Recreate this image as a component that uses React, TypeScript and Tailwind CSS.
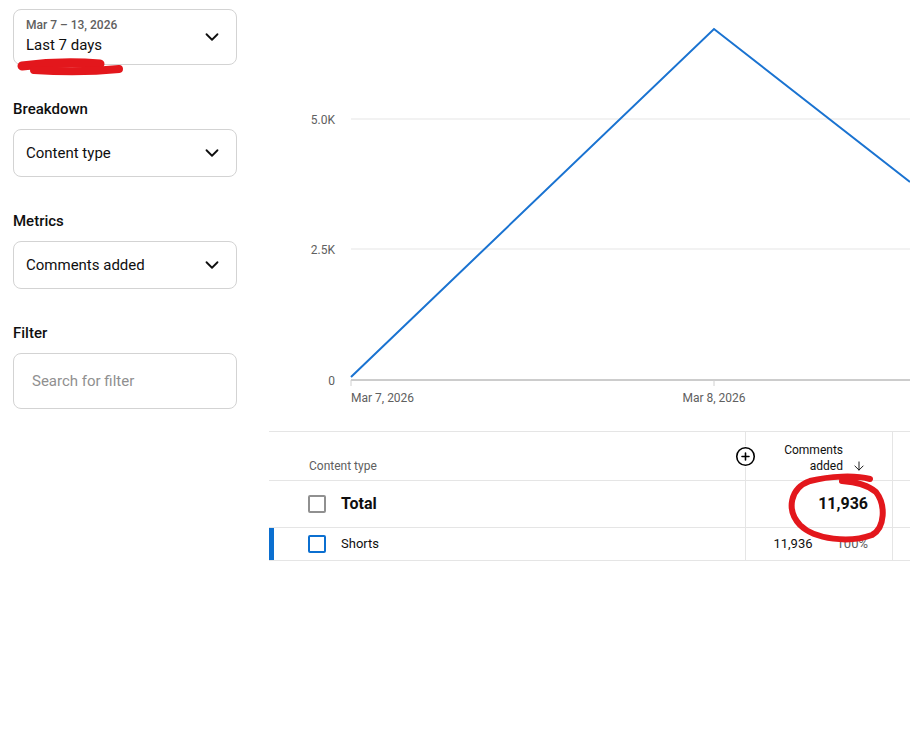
import {ChevronDown, CirclePlus, ArrowDown} from 'lucide-react';

const font = {fontFamily: 'Roboto, "Liberation Sans", sans-serif'};

const Select = ({label, value}: {label: string; value: string}) => (
	<div>
		<div className="text-[15px] leading-5 font-medium text-[#0f0f0f]">{label}</div>
		<div className="mt-[10px] h-12 rounded-lg border border-[#d3d3d3] flex items-center justify-between pl-3 pr-[13px]">
			<span className="text-[15px] text-[#0f0f0f]">{value}</span>
			<ChevronDown size={22} strokeWidth={2} className="text-[#0f0f0f]" />
		</div>
	</div>
);

const Chart = () => (
	<svg width={641} height={431} className="block" style={font}>
		<line x1={82} y1={119} x2={641} y2={119} stroke="#e5e5e5" />
		<line x1={82} y1={249} x2={641} y2={249} stroke="#e5e5e5" />
		<line x1={82} y1={380} x2={641} y2={380} stroke="#9a9a9a" />
		<line x1={445} y1={380} x2={445} y2={386} stroke="#d0d0d0" />
		<line x1={82} y1={380} x2={82} y2={386} stroke="#d0d0d0" />
		<text x={66} y={124} textAnchor="end" fontSize={12} fill="#606060">5.0K</text>
		<text x={66} y={254} textAnchor="end" fontSize={12} fill="#606060">2.5K</text>
		<text x={66} y={385} textAnchor="end" fontSize={12} fill="#606060">0</text>
		<text x={82} y={402} fontSize={12} fill="#606060">Mar 7, 2026</text>
		<text x={445} y={402} textAnchor="middle" fontSize={12} fill="#606060">Mar 8, 2026</text>
		<polyline points="82,377 445,29 641,182" fill="none" stroke="#1a73d1" strokeWidth={2} />
	</svg>
);

const Marker = () => (
	<svg width={910} height={743} className="absolute left-0 top-0 pointer-events-none">
		<g fill="none" stroke="#e3171c" strokeLinecap="round" strokeLinejoin="round">
			<path d="M22 66 Q 60 61 100 64" strokeWidth={9} />
			<path d="M34 70 Q 80 73 119 69" strokeWidth={8} />
			<path
				d="M870 479 C 855 475, 830 476, 810 481 C 790 488, 786 510, 800 525 C 815 540, 850 543, 872 535 C 885 528, 886 505, 876 492 C 868 485, 858 482, 842 481"
				strokeWidth={6}
			/>
		</g>
	</svg>
);

export default function App() {
	return (
		<div className="relative w-[910px] h-[743px] overflow-hidden bg-white text-[#0f0f0f]" style={font}>
			<div className="flex">
				<aside className="w-[224px] ml-[13px] pt-[9px] shrink-0">
					<div className="h-[56px] rounded-lg border border-[#d3d3d3] flex items-center justify-between pl-3 pr-[13px]">
						<div className="flex flex-col -mt-[3px]">
							<span className="text-xs font-medium text-[#606060] leading-4">Mar 7 – 13, 2026</span>
							<span className="text-[15px] leading-5 mt-[2px]">Last 7 days</span>
						</div>
						<ChevronDown size={22} strokeWidth={2} />
					</div>
					<div className="mt-[34px] flex flex-col gap-[34px]">
						<Select label="Breakdown" value="Content type" />
						<Select label="Metrics" value="Comments added" />
						<div>
							<div className="text-[15px] leading-5 font-medium">Filter</div>
							<div className="mt-[10px] h-[56px] rounded-lg border border-[#d3d3d3] flex items-center pl-[18px]">
								<span className="text-[15px] text-[#909090]">Search for filter</span>
							</div>
						</div>
					</div>
				</aside>

				<main className="ml-[32px] flex-1 overflow-hidden">
					<Chart />
					<div className="border-t border-[#e5e5e5] w-[700px]">
						<div className="grid grid-cols-[476px_148px_1fr] h-[49px] border-b border-[#e5e5e5]">
							<div className="flex items-end pl-[40px] pb-[6px] text-xs text-[#606060]">Content type</div>
							<div className="relative border-l border-r border-[#e5e5e5] flex items-end justify-end gap-[9px] pr-[26px] pb-[6px]">
								<CirclePlus size={21} strokeWidth={1.8} className="absolute -left-[11px] top-[14px] bg-white text-black" />
								<div className="text-right text-xs leading-4 text-[#0f0f0f]">
									<div>Comments</div>
									<div>added</div>
								</div>
								<ArrowDown size={14} strokeWidth={1.6} className="mb-[1px]" />
							</div>
							<div />
						</div>
						<div className="grid grid-cols-[476px_148px_1fr] h-[47px] border-b border-[#e5e5e5]">
							<div className="flex items-center pl-[39px] gap-[15px]">
								<span className="w-[18px] h-[18px] border-2 border-[#909090] rounded-[2px]" />
								<span className="text-base font-bold">Total</span>
							</div>
							<div className="border-l border-r border-[#e5e5e5] flex items-center justify-end pr-[24px]">
								<span className="text-base font-bold">11,936</span>
							</div>
							<div />
						</div>
						<div className="grid grid-cols-[476px_148px_1fr] h-[33px] border-b border-[#e5e5e5]">
							<div className="flex items-center">
								<span className="w-[5px] h-full bg-[#0b6fd0]" />
								<span className="ml-[34px] w-[18px] h-[18px] border-2 border-[#0b6fd0] rounded-[2px]" />
								<span className="ml-[15px] text-[13px]">Shorts</span>
							</div>
							<div className="border-l border-r border-[#e5e5e5] flex items-center justify-end pr-[24px] text-[13px]">
								<span>11,936</span>
								<span className="ml-[24px] text-[#606060]">100%</span>
							</div>
							<div />
						</div>
					</div>
				</main>
			</div>
			<Marker />
		</div>
	);
}
